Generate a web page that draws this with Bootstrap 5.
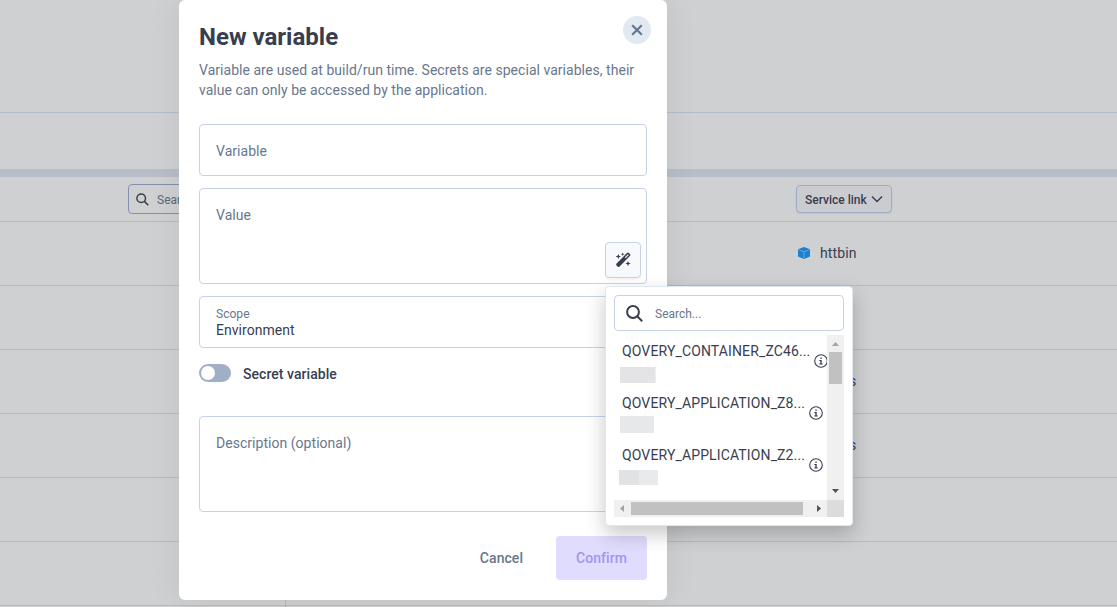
<!DOCTYPE html>
<html lang="en">
<head>
<meta charset="utf-8">
<meta name="viewport" content="width=device-width, initial-scale=1">
<title>New variable</title>
<link href="https://cdn.jsdelivr.net/npm/bootstrap@5.3.0/dist/css/bootstrap.min.css" rel="stylesheet">
<style>
  body { font-family: Roboto, "Liberation Sans", sans-serif; font-size: 14px; line-height: 20px; color: #383e50; background: #cfd0d1; height: 607px; overflow: hidden; }
  svg { display: block; flex: none; }
  .page-top { height: 113px; border-bottom: 1px solid #b2bccb; }
  .page-tabs { height: 64px; border-bottom: 8px solid #b6bec9; }
  .page-row { height: 64px; border-bottom: 1px solid #b5bac4; padding: 0 0 2px 797px; letter-spacing: .1px; }
  .page-side { height: 64px; border-bottom: 1px solid #b5bac4; }
  .page-filter { height: 45px; padding-left: 128px; border-bottom: 1px solid #b5bac4; }
  .filter-search { width: 300px; height: 30px; border: 1px solid #8090ad; border-radius: 4px; font-size: 12px; color: #5b6881; padding-left: 7px; gap: 8px; }
  .filter-search span { padding-top: 1px; }
  .filter-service { width: 96px; height: 28px; margin-left: 368px; border: 1px solid #9eacc6; border-radius: 4px; background: #cbccd0; font-size: 12px; font-weight: 500; padding: 0 8px; box-shadow: 0 1px 2px #0001; }
  .filter-service span { padding-top: 1px; }
  .link-name { margin-left: 9px; }
  .page-foot { height: 2px; }
  .side-rule { width: 286px; border-right: 1px solid #b0b5c0; }
  .dialog-panel { left: 179px; top: 0; width: 488px; height: 600px; border-radius: 6px; background: #fff; padding: 24px 20px 20px; box-shadow: 0 0 32px rgba(0,0,0,.08); }
  .dialog-title { font-size: 24px; line-height: 26px; font-weight: 700; margin: 0 0 10px; }
  .dialog-text { color: #67778e; margin: 0 0 24px; width: 440px; letter-spacing: .035px; }
  .round-close { right: 16px; top: 16px; width: 28px; height: 28px; background: #e2e9f3; border: 0; padding: 0; }
  .field { border: 1px solid #c6d3e7; border-radius: 4px; padding: 15px 16px; color: #67778e; margin-bottom: 12px; letter-spacing: .035px; }
  .field-line { height: 52px; padding-top: 16px; }
  .field-area { height: 96px; padding-top: 16px; }
  .wand { right: 5px; bottom: 5px; width: 36px; height: 36px; background: #f7f9fd; border: 1px solid #c6d3e7; border-radius: 4px; box-shadow: 0 2px 2px #0000000a; }
  .scope-label { font-size: 12px; line-height: 16px; margin-top: 1px; }
  .scope-value { color: #383e50; line-height: 16px; }
  .secret-line { height: 28px; margin-bottom: 28px; }
  .secret-name { font-weight: 500; letter-spacing: .05px; }
  .toggle { width: 32px; height: 18px; border-radius: 9px; background: #a0afc6; padding: 2px; margin-top: -2px; }
  .toggle-knob { width: 14px; height: 14px; border-radius: 50%; background: #fff; }
  .dialog-foot { padding-top: 12px; gap: 13px; }
  .foot-btn { height: 44px; border: 0; font-weight: 500; background: none; color: #67778e; padding: 0 20px; letter-spacing: .05px; }
  .confirm { background: #e0dcfd; color: #a294f2; border-radius: 4px; width: 91px; }
  .menu-pop { left: 605px; top: 286px; width: 248px; height: 240px; border: 1px solid #dfe7f3; border-radius: 4px; background: #fff; padding: 8px; box-shadow: 0 8px 20px rgba(0,0,0,.22); }
  .menu-search { height: 36px; border: 1px solid #c6d3e7; border-radius: 4px; color: #67778e; font-size: 12px; padding-left: 11px; gap: 12px; margin-bottom: 4px; }
  .menu-search span { padding-top: 1px; }
  .menu-list { width: 213px; height: 165px; padding-left: 8px; overflow: hidden; }
  .menu-entry { height: 52px; padding-top: 6px; gap: 4px; }
  .menu-entry svg { margin-top: 13px; }
  .var-name { line-height: 20px; letter-spacing: .13px; white-space: nowrap; }
  .blur-chip { height: 17px; background: #e7e8ea; margin: 3px 0 0 -2px; }
  .chip-first { height: 16px; margin-top: 6px; background: linear-gradient(90deg, #e4e4e6 97%, #eeeff0 97%); }
  .chip-last { height: 15px; margin: 5px 0 0 -3px; background: linear-gradient(90deg, #e1e2e4 51%, #e9eaec 51%); }
  .bar-v { width: 17px; height: 165px; background: #f0f0f0; }
  .thumb-v { width: 13px; height: 32px; background: #c1c1c1; }
  .bar-h { width: 213px; height: 17px; background: #f0f0f0; }
  .thumb-h { width: 172px; height: 13px; background: #c1c1c1; }
  .bar-corner { width: 17px; height: 17px; background: #dcdcdc; }
</style>
</head>
<body>
<main>
  <div class="page-top"></div>
  <div class="page-tabs"></div>
  <div class="page-filter d-flex align-items-center">
    <div class="filter-search d-flex align-items-center">
      <svg width="13" height="13" viewBox="0 0 13 13" fill="none" stroke="#383e50" stroke-width="1.5"><circle cx="5.2" cy="5.2" r="4.3"/><path d="M8.4 8.4 12.3 12.3"/></svg>
      <span>Search...</span>
    </div>
    <div class="filter-service d-flex align-items-center justify-content-between">
      <span>Service link</span>
      <svg width="12" height="8" viewBox="0 0 12 8" fill="none" stroke="#383e50" stroke-width="1.5"><path d="M1 1.5 6 6.5 11 1.5"/></svg>
    </div>
  </div>
  <div class="page-row d-flex align-items-center">
    <svg width="14" height="14" viewBox="0 0 14 14"><path d="M7 1 13 3.2V10.5L7 13 1 10.5V3.2Z" fill="#1c80cf"/><path d="M1.4 3.6 7 5.8 12.6 3.6M7 5.8V12.6" fill="none" stroke="#69ace0" stroke-width=".9"/></svg>
    <span class="link-name">httbin</span>
  </div>
  <div class="page-row"></div>
  <div class="page-row d-flex align-items-center"><span class="ms-5 ps-1">s</span></div>
  <div class="page-row d-flex align-items-center"><span class="ms-5 ps-1">s</span></div>
  <div class="page-row"></div>
  <div class="page-side"><div class="side-rule h-100"></div></div>
  <div class="page-foot"><div class="side-rule h-100"></div></div>
</main>

<section class="dialog-panel position-absolute">
  <h1 class="dialog-title">New variable</h1>
  <p class="dialog-text">Variable are used at build/run time. Secrets are special variables, their value can only be accessed by the application.</p>
  <button class="round-close position-absolute rounded-circle d-flex align-items-center justify-content-center" aria-label="Close">
    <svg width="12" height="12" viewBox="0 0 12 12" stroke="#67778e" stroke-width="2.2"><path d="M1.2 1.2 10.8 10.8M10.8 1.2 1.2 10.8"/></svg>
  </button>
  <div class="field field-line">Variable</div>
  <div class="field field-area position-relative">Value
    <button class="wand position-absolute p-0 d-flex align-items-center justify-content-center" aria-label="Variables">
      <svg width="16" height="16" viewBox="0 0 16 16" fill="#383e50"><path fill-rule="evenodd" d="M11.9 1.1a1.5 1.5 0 0 1 2.1 0l.9.9a1.5 1.5 0 0 1 0 2.1L4.6 14.4a1.5 1.5 0 0 1-2.1 0l-.9-.9a1.5 1.5 0 0 1 0-2.1ZM13 2.2 9.8 5.4l.8.8 3.200-3.200Z"/><path d="M3.300 1.800 4 3.800 6 4.500 4 5.200 3.300 7.200 2.600 5.200.6 4.500 2.600 3.800ZM7.700.5 8.200 1.800 9.500 2.300 8.200 2.800 7.700 4.100 7.200 2.800 5.900 2.300 7.200 1.800ZM13 8.800l.7 2 2 .7-2 .7-.7 2-.7-2-2-.7 2-.7Z"/></svg>
    </button>
  </div>
  <div class="field field-line pt-2">
    <div class="scope-label">Scope</div>
    <div class="scope-value">Environment</div>
  </div>
  <div class="secret-line d-flex align-items-center gap-2">
    <div class="toggle me-1"><div class="toggle-knob"></div></div>
    <span class="secret-name">Secret variable</span>
  </div>
  <div class="field field-area">Description (optional)</div>
  <div class="dialog-foot d-flex justify-content-end">
    <button class="foot-btn">Cancel</button>
    <button class="foot-btn confirm p-0">Confirm</button>
  </div>
</section>

<aside class="menu-pop position-absolute">
  <div class="menu-search d-flex align-items-center">
    <svg width="17" height="17" viewBox="0 0 17 17" fill="none" stroke="#383e50" stroke-width="2"><circle cx="7" cy="7" r="5.9"/><path d="M11.2 11.2 16.2 16.2"/></svg>
    <span>Search...</span>
  </div>
  <div class="d-flex">
    <div class="menu-list">
      <div class="menu-entry d-flex">
        <div><div class="var-name">QOVERY_CONTAINER_ZC46...</div><div class="blur-chip chip-first" style="width:36px"></div></div>
        <svg width="14" height="14" viewBox="0 0 14 14"><circle cx="7" cy="7" r="6.3" fill="none" stroke="#383e50" stroke-width="1.1"/><path d="M6.3 3.4h1.5v1.4H6.3ZM5.3 6h2.4v3.5h1v1H5.3v-1h1V7h-1Z" fill="#383e50"/></svg>
      </div>
      <div class="menu-entry d-flex">
        <div><div class="var-name">QOVERY_APPLICATION_Z8...</div><div class="blur-chip" style="width:34px"></div></div>
        <svg width="14" height="14" viewBox="0 0 14 14"><circle cx="7" cy="7" r="6.3" fill="none" stroke="#383e50" stroke-width="1.1"/><path d="M6.3 3.4h1.5v1.4H6.3ZM5.3 6h2.4v3.5h1v1H5.3v-1h1V7h-1Z" fill="#383e50"/></svg>
      </div>
      <div class="menu-entry d-flex">
        <div><div class="var-name">QOVERY_APPLICATION_Z2...</div><div class="blur-chip chip-last" style="width:39px"></div></div>
        <svg width="14" height="14" viewBox="0 0 14 14"><circle cx="7" cy="7" r="6.3" fill="none" stroke="#383e50" stroke-width="1.1"/><path d="M6.3 3.4h1.5v1.4H6.3ZM5.3 6h2.4v3.5h1v1H5.3v-1h1V7h-1Z" fill="#383e50"/></svg>
      </div>
    </div>
    <div class="bar-v d-flex flex-column align-items-center">
      <svg width="17" height="17"><path d="M5 11h7L8.5 7Z" fill="#a3a3a3"/></svg>
      <div class="thumb-v"></div>
      <svg class="mt-auto" width="17" height="17"><path d="M5 6h7L8.5 10Z" fill="#505050"/></svg>
    </div>
  </div>
  <div class="d-flex">
    <div class="bar-h d-flex align-items-center">
      <svg width="17" height="17"><path d="M10 5v7L6 8.5Z" fill="#a3a3a3"/></svg>
      <div class="thumb-h"></div>
      <svg class="ms-auto" width="17" height="17"><path d="M7 5v7L11 8.5Z" fill="#505050"/></svg>
    </div>
    <div class="bar-corner"></div>
  </div>
</aside>
<script src="https://cdn.jsdelivr.net/npm/bootstrap@5.3.0/dist/js/bootstrap.bundle.min.js"></script>
</body>
</html>
